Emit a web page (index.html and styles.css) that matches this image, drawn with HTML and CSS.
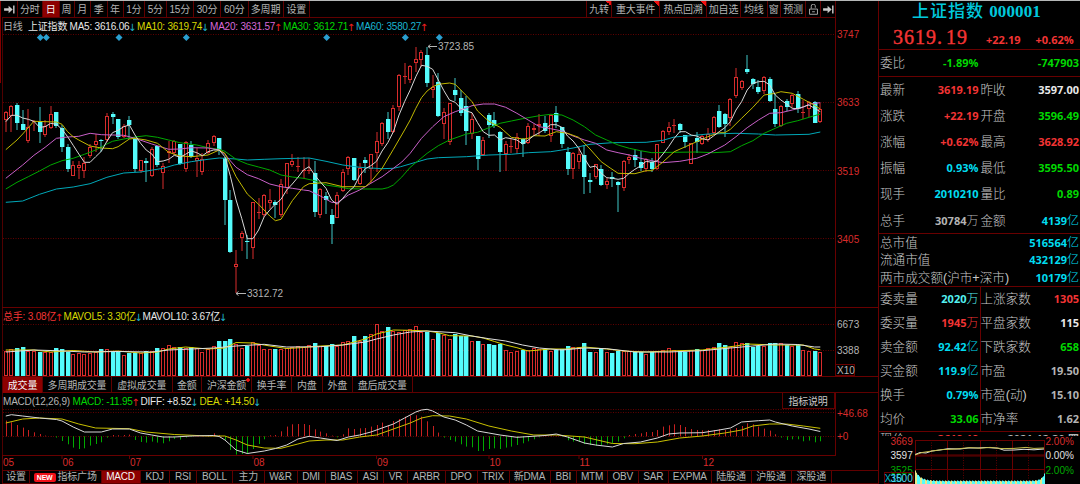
FILE: index.html
```html
<!DOCTYPE html>
<html lang="zh-CN">

<head>
  <meta charset="utf-8">
  <title>上证指数 000001</title>
  <link rel="stylesheet" href="styles.css">
</head>

<body>
  <div class="app">
    <div class="left">
      <div class="toolbar">
        <div class="periods">
          <span><svg class="icon" viewBox="0 0 12 10"><path d="M0 3.5h5V0.8L9.5 5 5 9.2V6.5H0zM10 0.5h1.6v9H10z"/></svg></span>
          <span>分时</span><span class="active">日</span><span>周</span><span>月</span><span>季</span><span>年</span>
          <span>1分</span><span>5分</span><span>15分</span><span>30分</span><span>60分</span><span>多周期</span><span>设置</span>
        </div>
        <div class="tools">
          <span class="corner">九转</span><span class="corner">重大事件</span><span class="corner">热点回溯</span>
          <span>加自选</span><span>均线</span><span>窗</span><span>预测</span>
          <span><svg class="icon lock" viewBox="0 0 10 12"><path d="M2.5 5V2.5a2 2 0 0 1 4.5-.5V4M.6 5.5h8.8v5.8H.6zM3.5 8.5h3"/></svg></span>
          <span><svg class="icon" viewBox="0 0 12 10"><path d="M0 3.5h5V0.8L9.5 5 5 9.2V6.5H0zM10 0.5h1.6v9H10z"/></svg></span>
        </div>
      </div>

      <div class="pane">
        <div class="legend price-legend">
          <span class="grey">日线</span><span class="white">上证指数</span>
          <span class="white">MA5: 3616.06<i class="down">↓</i></span>
          <span class="yellow">MA10: 3619.74<i class="down">↓</i></span>
          <span class="magenta">MA20: 3631.57<i class="up">↑</i></span>
          <span class="green">MA30: 3612.71<i class="up">↑</i></span>
          <span class="aqua">MA60: 3580.27<i class="up">↑</i></span>
        </div>
        <svg id="price" width="876" height="290" viewBox="2 18 876 290"></svg>
      </div>

      <div class="pane">
        <div class="legend volume-legend">
          <span class="red">总手: 3.08亿<i class="up">↑</i></span>
          <span class="yellow">MAVOL5: 3.30亿<i class="down">↓</i></span>
          <span class="white">MAVOL10: 3.67亿<i class="down">↓</i></span>
        </div>
        <svg id="volume" width="876" height="69" viewBox="2 308 876 69"></svg>
      </div>

      <div class="tabs volume-tabs">
        <span class="active">成交量</span><span>多周期成交量</span><span>虚拟成交量</span><span>金额</span><span class="dot">沪深金额</span><span>换手率</span><span>内盘</span><span>外盘</span><span>盘后成交量</span>
      </div>

      <div class="pane">
        <div class="legend macd-legend">
          <span class="grey">MACD(12,26,9)</span>
          <span class="green">MACD: -11.95<i class="up">↑</i></span>
          <span class="white">DIFF: +8.52<i class="down">↓</i></span>
          <span class="yellow">DEA: +14.50<i class="down">↓</i></span>
          <span class="explain">指标说明</span>
        </div>
        <svg id="macd" width="876" height="77" viewBox="2 393 876 77"></svg>
      </div>

      <div class="tabs indicator-tabs">
        <span>设置</span><span><b class="new">NEW</b>指标广场</span><span class="active">MACD</span><span>KDJ</span><span>RSI</span><span>BOLL</span><span>主力</span><span>W&amp;R</span><span>DMI</span><span>BIAS</span><span>ASI</span><span>VR</span><span>ARBR</span><span>DPO</span><span>TRIX</span><span>新DMA</span><span>BBI</span><span>MTM</span><span>OBV</span><span>SAR</span><span>EXPMA</span><span>陆股通</span><span>沪股通</span><span>深股通</span>
      </div>
    </div>

    <div class="quote">
      <div class="title">上证指数 <b>000001</b></div>
      <div class="last"><span class="big">3619.<em>19</em></span><b>+22.19</b><b>+0.62%</b></div>
      <div class="block ratio">
        <div class="cell"><label>委比</label><b class="green">-1.89%</b></div>
        <div class="cell"><label></label><b class="green">-747903</b></div>
      </div>
      <div class="block basics">
        <div class="cell"><label>最新</label><b class="red">3619.19</b></div>
        <div class="cell"><label>昨收</label><b class="white">3597.00</b></div>
        <div class="cell"><label>涨跌</label><b class="red">+22.19</b></div>
        <div class="cell"><label>开盘</label><b class="green">3596.49</b></div>
        <div class="cell"><label>涨幅</label><b class="red">+0.62%</b></div>
        <div class="cell"><label>最高</label><b class="red">3628.92</b></div>
        <div class="cell"><label>振幅</label><b class="cyan">0.93%</b></div>
        <div class="cell"><label>最低</label><b class="green">3595.50</b></div>
        <div class="cell"><label>现手</label><b class="cyan">2010210</b></div>
        <div class="cell"><label>量比</label><b class="green">0.89</b></div>
        <div class="cell"><label>总手</label><b class="grey">30784<u>万</u></b></div>
        <div class="cell"><label>金额</label><b class="cyan">4139<u>亿</u></b></div>
      </div>
      <div class="block wide">
        <div class="cell"><label>总市值</label><b class="cyan">516564<u>亿</u></b></div>
        <div class="cell"><label>流通市值</label><b class="cyan">432129<u>亿</u></b></div>
        <div class="cell"><label>两市成交额(沪市+深市)</label><b class="cyan">10179<u>亿</u></b></div>
      </div>
      <div class="block orders">
        <div class="cell"><label>委卖量</label><b class="teal">2020<u>万</u></b></div>
        <div class="cell"><label>上涨家数</label><b class="red">1305</b></div>
        <div class="cell"><label>委买量</label><b class="red">1945<u>万</u></b></div>
        <div class="cell"><label>平盘家数</label><b class="white">115</b></div>
        <div class="cell"><label>卖金额</label><b class="cyan">92.42<u>亿</u></b></div>
        <div class="cell"><label>下跌家数</label><b class="green">658</b></div>
        <div class="cell"><label>买金额</label><b class="cyan">119.9<u>亿</u></b></div>
        <div class="cell"><label>市盈</label><b class="grey">19.50</b></div>
        <div class="cell"><label>换手</label><b class="cyan">0.79%</b></div>
        <div class="cell"><label>市盈(动)</label><b class="grey">15.10</b></div>
        <div class="cell"><label>均价</label><b class="green">33.06</b></div>
        <div class="cell"><label>市净率</label><b class="grey">1.62</b></div>
      </div>
      <div class="block clipped">
        <div class="cell"><label>现价</label><b class="red">3619.19</b></div>
        <div class="cell"><label></label><b class="grey">2021-12-30,四</b></div>
      </div>
      <svg id="mini" width="201" height="48" viewBox="879 436 201 48"></svg>
    </div>
  </div>

  <script src="chart.js"></script>
</body>

</html>
```

FILE: styles.css
```css
* {
  box-sizing: border-box;
}

body {
  margin: 0;
  background: #000;
  color: #b4b4b4;
  font-family: "Liberation Sans", "Noto Sans CJK SC", sans-serif;
  font-size: 10px;
}

i,
em,
u {
  font-style: normal;
  text-decoration: none;
}

svg {
  display: block;
}

.app {
  display: flex;
  width: 1080px;
  height: 484px;
  overflow: hidden;
  border-top: 1px solid #b5b8b8;
}

.red { color: #f23434; }
.green { color: #00d800; }
.white { color: #e8e8e8; }
.grey { color: #b4b4b4; }
.yellow { color: #d8d800; }
.magenta { color: #d868d8; }
.aqua { color: #1ab4d0; }
.cyan { color: #00dcf0; }
.teal { color: #54f0f0; }

/* chart side */

.left {
  display: grid;
  grid-template-rows: 17px 290px 69px 16px 77px 14px;
  width: 878px;
  padding-left: 2px;
  background: linear-gradient(#800000, #800000) 0 0 / 1px 82px no-repeat;
}

.toolbar {
  display: flex;
  justify-content: space-between;
  width: 834px;
  border-bottom: 1px solid #600000;
}

.periods,
.tools,
.tabs {
  display: grid;
  white-space: nowrap;
  line-height: 15px;
}

.periods span,
.tools span,
.tabs span {
  display: flex;
  align-items: center;
  justify-content: center;
  border-right: 1px solid #600000;
  letter-spacing: -0.2px;
}

.periods {
  grid-template-columns: 15.5px 25.5px 16.5px 15px 16.5px 16.5px 16px 21.5px 21.5px 27.5px 27px 27.5px 35px 26.5px;
}

.tools {
  grid-template-columns: 25px 48px 47px 34px 26.5px 13.5px 25px 15px 15px;
  border-left: 1px solid #600000;
}

.periods .active,
.tabs .active {
  background: #8c0000;
  color: #f4f4f4;
}

.tools .corner {
  background: linear-gradient(45deg, transparent 50%, #f01010 50%) top right / 5px 5px no-repeat;
}

.icon {
  width: 11px;
  height: 9px;
  fill: #c8c8c8;
}

.lock {
  width: 9px;
  height: 11px;
  fill: none;
  stroke: #b4b4b4;
}

.pane {
  display: grid;
  border-left: 1px solid #500000;
}

.pane svg,
.legend {
  grid-area: 1 / 1;
}

.pane svg {
  margin-left: -1px;
}

.legend {
  display: grid;
  justify-content: start;
  align-content: start;
  line-height: 18px;
  letter-spacing: -0.2px;
  white-space: nowrap;
  z-index: 1;
}

.price-legend {
  grid-template-columns: 25px 41.5px 67.5px 73px 73px 73px 80px;
}

.volume-legend {
  grid-template-columns: 60.5px 79px 90px;
}

.macd-legend {
  grid-template-columns: 69.5px 68px 59px 582px 53px;
  line-height: 17px;
}

.legend .up { color: #f02020; }
.legend .down { color: #20b8d0; }

.legend i {
  display: inline-block;
  width: 5px;
  font: 10px/10px "DejaVu Sans", sans-serif;
  transform: translate(-1.5px, 1px);
}

.explain {
  color: #c8c8c8;
  border: 1px solid #600000;
  border-top: 0;
  text-align: center;
  height: 16px;
}

.tabs {
  justify-content: start;
  border-left: 1px solid #600000;
}

.volume-tabs {
  grid-template-columns: 40px 69px 60.5px 29.5px 50px 40px 30.5px 30.5px 59.5px;
  line-height: 17px;
  border-bottom: 1px solid #600000;
}

.volume-tabs span {
  height: 16px;
}

.volume-tabs .dot {
  background: radial-gradient(circle at 46px 3px, #f01010 1.5px, transparent 2px);
}

.indicator-tabs {
  grid-template-columns: 27px 71.5px 39px 29.5px 27px 36px 31.5px 33px 28px 32.5px 26px 24px 37.5px 32px 32px 41px 26.5px 31px 30.5px 30.5px 42.5px 40px 40px 40.5px;
  line-height: 12px;
  border-top: 1px solid #600000;
  border-bottom: 1px solid #600000;
}

.new {
  margin-right: 2px;
  padding: 0 3px;
  border-radius: 2px;
  background: #f01018;
  color: #fff;
  font-size: 7px;
  line-height: 9px;
}

.grid {
  stroke: #600000;
  stroke-dasharray: 1 1.5;
}

.frame {
  stroke: #680000;
  fill: none;
}

.axis {
  fill: #d82c2c;
}

.axis-grey {
  fill: #b4b4b4;
}

/* quote side */

.quote {
  width: 202px;
  border-left: 1px solid #680000;
}

.title {
  height: 23px;
  padding-left: 33px;
  color: #00c8dc;
  font: 500 17px/22px "Liberation Serif", "Noto Sans CJK SC", serif;
  letter-spacing: 1px;
  white-space: nowrap;
}

.title b {
  letter-spacing: 0.1px;
}

.last {
  display: flex;
  align-items: baseline;
  height: 25px;
  padding: 0 5px 0 14px;
  color: #f23434;
}

.last .big {
  width: 94px;
  font: 20px/26px "Liberation Serif", serif;
  letter-spacing: 1px;
  -webkit-text-stroke: 0.4px #f23434;
}

.last .big em {
  margin-left: 3px;
}

.last b {
  width: 50px;
  font: bold 11px "Open Sans", sans-serif;
}

.last b:last-child {
  width: 40px;
}

.block {
  display: grid;
  grid-template-columns: 100.5px 100.5px;
  border-top: 1px solid #680000;
}

.cell {
  display: flex;
  align-items: center;
  justify-content: space-between;
  padding: 0 1px;
  white-space: nowrap;
  overflow: hidden;
}

.cell label {
  font: 300 12.6px/18px "Liberation Sans", "Noto Sans CJK SC", sans-serif;
  color: #c8c8c8;
}

.cell b {
  font: bold 11px/18px "Open Sans", "Noto Sans CJK SC", sans-serif;
}

.cell u {
  font-weight: 300;
  font-size: 12px;
}

.ratio {
  height: 27px;
}

.basics {
  height: 157px;
  grid-template-rows: repeat(6, 26.1px);
}

.wide {
  height: 53px;
  grid-template-columns: 201px;
  grid-template-rows: repeat(3, 17.5px);
}

.orders {
  height: 145px;
  grid-template-rows: repeat(6, 24px);
  background: linear-gradient(#680000, #680000) 101px 0 / 1px 100% no-repeat;
}

.clipped {
  height: 5px;
  overflow: hidden;
}

.clipped .cell {
  height: 14px;
}
```

FILE: chart.js
```js
const RED = "#d82c2c";
const CYAN = "#54fcfc";
const STEP = 5.617;
const xAt = i => 5.8 + i * STEP;

// direction, high, body top, body bottom, low
const candles = `r111,112,120,132 r105,106,116,132 c103,105,123,130 c110,124,130,130 r109,127,141,143 r120,121,122,131
c107,122,132,143 r120,126,135,137 r106,114,128,129 c112,112,126,128 c125,128,147,152 c144,147,169,172
r161,165,176,176 r161,165,168,179 r157,163,171,178 r144,147,156,158 r134,141,145,152 c139,140,141,152
r113,116,140,142 c112,114,117,124 c119,119,137,139 r124,126,137,138 c116,120,125,139 c137,138,169,172
r160,160,171,173 c158,161,163,182 r147,149,176,177 c146,146,165,167 r163,166,173,189 r141,151,153,163
r140,141,153,155 c144,144,164,165 r141,142,169,172 c141,145,157,158 r148,158,161,177 r153,159,172,175
r140,143,153,154 r135,136,143,146 c138,138,150,155 c157,158,200,225 c190,200,252,253 r250,264,267,293
r231,233,238,251 c235,241,242,259 r202,202,248,259 r198,212,213,219 r194,195,215,217 r189,200,203,209
c200,202,205,218 r179,184,215,217 r163,163,188,194 r154,161,165,167 r157,166,167,172 r157,170,171,179
r158,170,171,174 c161,173,212,217 r188,189,215,218 c192,196,200,214 c209,215,224,244 r192,195,218,218
r169,172,191,192 r156,157,169,175 c158,158,180,181 r163,168,184,185 c157,160,163,173 r154,154,169,183
r132,141,153,172 r122,123,144,146 c112,119,132,139 r105,108,132,133 r74,75,107,111 r63,76,77,84
r65,66,80,83 r47,59,63,72 r50,52,60,67 c47,55,83,87 r75,87,90,98 c73,82,116,117
r108,112,124,139 r103,103,142,145 c78,90,95,101 c90,98,113,116 c96,106,131,145 r113,119,134,139
c136,136,159,170 r137,140,155,156 c113,115,125,138 c112,120,126,128 c131,132,152,172 r141,144,154,171
r138,146,147,153 r133,137,149,154 c138,139,144,157 r123,126,143,144 r124,128,130,136 r114,124,126,136
c116,123,131,133 r114,115,136,142 c106,113,122,128 c127,127,144,148 c147,152,169,175 r152,153,169,179
r147,154,162,169 c145,155,177,194 c173,180,182,193 r164,164,177,179 c165,169,185,186 r178,181,185,189
c172,177,179,187 c181,182,185,212 r160,161,188,191 r154,157,160,164 c149,155,160,167 c151,162,168,171
r158,159,169,172 c158,162,169,172 r144,144,169,170 r130,131,143,143 r122,127,132,135 r119,125,126,133
c123,124,130,133 c135,135,142,148 r143,143,164,164 c132,138,142,153 r135,136,144,145 r128,134,140,142
r116,117,133,135 c105,111,127,128 c113,114,124,137 r98,99,118,126 r68,77,96,98 r80,81,88,90
c55,69,72,74 c78,79,84,89 c80,87,92,94 r76,77,91,94 c77,79,101,102 c94,109,124,127
r105,106,126,127 c99,101,107,111 r94,95,104,108 c91,94,109,113 r100,112,113,119 r101,102,109,117
c101,102,123,123 r103,109,122,123`.split(/\s+/).map(s => [s[0], ...s.slice(1).split(",").map(Number)]);

const volumes = [351, 349, 348, 347, 351, 351, 352, 352, 352, 347.5, 348.5, 352, 354, 353, 354, 353, 352, 349, 348.5, 351,
  352, 355, 353, 352.5, 353, 351, 351, 348, 348, 344.5, 347, 346.5, 348, 347, 348, 352, 349, 346, 341, 341,
  338.5, 344, 348, 346, 342, 345, 348.5, 348.5, 349, 349, 348, 347, 346, 347, 345, 342.5, 346, 346, 344, 346,
  342, 340.5, 336, 341, 335.5, 334, 324, 331, 327, 331, 332, 330, 328.5, 326, 332, 331.7, 338.7, 332.7, 335.3, 339.3,
  334, 335.7, 336, 341.3, 340.7, 344.3, 344, 345, 344.3, 350.3, 352, 351, 350, 350, 348, 349, 349, 351, 350, 349,
  346.3, 347, 347, 343, 351.7, 351.7, 348.3, 352, 353, 351, 351, 351, 352, 352, 354, 352, 351, 350, 347.5, 350,
  351, 352, 350, 349, 350, 348, 346.5, 342.7, 344.5, 346.7, 342, 343, 342.7, 347.3, 346, 346, 343.3, 342.7, 343.3, 344.7,
  346.3, 344.5, 350.3, 351, 351.3, 352];

const hist = [47, 42, 34, 26, 19, 12, 7, 2, 1, -4, -14, -24, -34, -38, -36, -28, -23, -18, -4, 4,
  3, 4, 5, -11, -17, -19, -16, -19, -21, -15, -8, -10, -4, -2, 3, 2, 4, 9, 4, -11,
  -41, -55, -53, -53, -38, -23, -9, 3, 4, 15, 29, 36, 37, 37, 34, 21, 14, 9, 2, -3,
  6, 24, 22, 24, 25, 29, 34, 41, 34, 46, 52, 59, 62, 63, 59, 45, 31, 11, -4, -11,
  -16, -24, -31, -33, -44, -44, -38, -36, -38, -34, -31, -26, -21, -15, -9, -3, 1, 2, 2, -2,
  -12, -16, -16, -23, -26, -28, -27, -24, -21, -16, -6, 4, 7, 9, 13, 13, 19, 29, 33, 36,
  34, 28, 22, 19, 18, 19, 19, 22, 19, 21, 25, 31, 39, 36, 29, 23, 17, 6, -4, -11,
  -9, -9, -15, -13, -18, -15];

const ma5 = [121.7, 115.3, 115.3, 118, 119.3, 121.3, 127.3, 126.7, 123.3, 124.3, 129.3, 136.7, 145.3, 154, 162.3, 162.3, 156.7, 151.3, 141.3, 132.7,
  130.3, 126.7, 125, 135, 143.3, 150, 154, 161.7, 161, 159.3, 155.3, 157.3, 154.3, 151, 152.7, 155.7, 151.7, 150, 150, 156.7,
  176.7, 200, 218.3, 238.7, 238.7, 230, 216.7, 210, 204, 199.3, 190, 184, 177.3, 170, 166.7, 175, 182, 188.3, 200, 204.3,
  198.3, 191.7, 186.7, 175.7, 168.7, 165.7, 161.3, 151, 142.7, 131.7, 115, 101.7, 90, 76.7, 65.3, 66.3, 69.3, 80, 90.7, 100,
  102.3, 108.3, 111, 112.7, 122.7, 131.7, 135.3, 135, 140, 137.7, 138.7, 140, 144, 140, 135.7, 132.7, 129, 124.7, 124.7, 127.3,
  136, 141, 148.3, 158.3, 167.3, 166, 173.3, 177.7, 178.3, 179.3, 178.3, 173.3, 169.3, 166, 161.3, 162.3, 160.7, 154, 146.7, 138.3,
  131.7, 131.7, 135, 136, 138.7, 140, 136, 131.7, 127.7, 121.7, 110, 101.7, 90, 83.3, 81.7, 81.3, 85, 95, 100, 104,
  108.3, 108.7, 106.7, 105, 108.3, 111.7];

// index:y pairs
const lines = {
  ma10: "0:149.7 2:140 3:134 5:121.3 9:122 10:124.3 11:131.7 12:136.7 13:140 15:146 17:148 19:148.7 20:146.7 22:139 23:138.3 25:140 27:143.3 29:152.3 31:156 33:156.7 36:155 38:150 39:153.3 41:176.7 43:194 45:204.3 47:216 48:220.7 49:219.3 51:200.7 53:186.7 54:183.7 57:182.7 60:186.7 62:186.7 64:186.7 65:181.7 67:168.3 69:149.3 71:130 72:120 73:108.3 74:97.7 75:91 76:86.7 77:84.3 79:83 80:84.3 82:95.7 83:101.7 84:111 86:121.3 88:127.3 90:137.3 92:139 93:138.3 94:135.7 96:136 98:131.7 100:133.3 102:137.3 104:149 106:161.7 107.6:168 109:173.3 112:173.7 114:170.7 115:170.7 117:162 119:151.7 121:146.7 123:141.7 125:136.7 127:132.7 128:132.7 129:129.3 131:118.3 133:107.3 135:95 137:93.3 138:91.7 140:93.3 142:99.3 144:105.3 145:109",
  ma20: "0:178.3 3:165 5:155.3 7:147.3 9:138.3 11:137 13:136.3 15:133.3 17:134.7 21:135.3 23:138.3 26:144 29:149.3 31:149 33:147.7 36:148 38:150 39:154 40:161 41:167.3 43:174.7 45:178.7 47:184 49:186.7 51:188.3 53:190 54:190.7 56:196 58:202.3 59:202.7 61:195 63:190 65:183.3 67:176.7 69:168.3 70.5:162 72:153.3 74:138.3 76:126.7 78:116.7 80:111.7 82:108 83:105.7 85:104 87:104 89:107.3 91:113.3 93:120 95:126.7 97:128.7 99:131 101:136 103:140 105:143.3 107:150 109:152.7 111:155 113:158.3 115:160.7 117:162.7 120:161.3 123:158.3 125:154 128:145 130:136.7 132:127.7 134:120 136:113.3 138:112.7 140:110 142:107.3 143:104 145:102.7",
  ma30: "0:189 2:182.3 4:176.7 6:171 8:165 10:160.7 12:158.3 14:154.3 16:150 18:144 19:141.3 21:139 23:137 25:135.7 27:137.3 29:140 31:142.7 34:145 36:147.7 38:149.3 39:151.3 41:159.3 43:164 45:167 47:170 49:175 51:177 53:178.3 55:180.7 57:185 59:186.7 61:188.7 64:189 67:189 68:187.7 69:185 70.5:177 72:167.3 75:153.3 77:145.7 79:140 82:134 84:132.3 86:127.7 88:123.3 90:121 92:118.7 95:115.7 97:114.3 99:115 101:120 103:126.7 105:135 107:140 109:145 111:148.3 113:150.7 115:152.7 119:152.3 123:152 126:152.7 129:151.7 131:145.7 133:140.7 135:133.3 137:128.3 139:123.3 141:120.7 143:117.3 145:114",
  ma60: "0:202.3 3:201 6:194.3 9:189 12:187 15:183.7 18:177.3 21:173 24:172 28:168.3 30:165 33:161.7 36:159.3 38:158 41:159 43:160 46:159.3 49:158.7 54:158 57:161.3 60:165 63:167.3 67:168.7 69:168.3 70.3:166.7 73:162.3 75:159 77:157.7 82:156.7 86:155 90:154.3 93:152.7 97:151.7 99:150 101:148 104:144.3 108:142.7 114:142.3 117:140.3 119:137 122:135.7 125:134 130:133.3 134:134 137:135 143:134.3 145:132",
  vol5: "0:350 5:350 8:352 12:350.5 16:352 20:351 24:353 27:352 29:349 32:347 36:349 39:348 41:342.5 44:343 47:346 50:348.5 53:347.5 56:346 60:345 62:342 64:339 66:334 69:330 72:330.3 75:331 77:332.7 79:335.7 83:336 85:338 87:341.5 89:345 91:347.7 93:351 95:350 97:349 100:349 103:347 107:349 110:351 114:352 118:351 124:350 127:348 130:346 132:344 137:345 142:345 144:349 145:349.7",
  vol10: "0:352 5:350 9:350.7 14:352 20:351.5 26:352 29:350 33:349 37:348 41:346 46:344.3 50:347 56:346.7 60:345 64:342 66:339 69:335 72:332 75:331 80:332.7 83:336 86:338.7 89:341 92:345 95:348 99:350 103:348 107:348.7 112:352 118:352 124:350.7 129:348 133:346 137:344 141:344.5 144:347 145:347",
  diff: "0:416 1:414.7 3:416 6:418 9:419.5 10:421 12:427 14:432 17:432 19:429 22:429 24:433 26:435 28:437 30:437 33:436 37:435.5 38:436.5 39:440 41:450 43:453.5 46:451 48:448.5 50:445 52:439 54:436.3 56:438 59:440.5 61:437 63:435 65:432 67:428 69:424 71:418 73:412 74:410 75:409.3 76:411 78:417 80:420 82:425 84:431 86:433 88:435 91:437.3 96:435.5 98:434 100:437 103:443 105:445 108:447 110:443.5 113:442 116:438 118:434 120:433 124:432.7 127:430 129:428 131:422 134:420.7 136:420 137:422 140:426 143:429 145:431.5",
  dea: "0:423 3:419 6:418 10:419 13:424 16:428 22:428.7 25:432 30:434.5 36:436 39:436 41:440 43:445 46:448 49:448.3 52:444 54:441 57:440 60:440 63:437 66:435 69:429 72:423 74:418 76:415.7 79:416 82:419 86:426 90:431 94:435 98:435 103:437 108:443.5 112:443.7 116:442 120:438 124:436 128:433 131:430 133:426 136:424 139:424 142:426 145:428.3"
};

function polyline(points, color) {
  return `<polyline points="${points}" fill="none" stroke="${color}" stroke-width="1"/>`;
}

function curve(spec, color) {
  return polyline(spec.split(" ").map(p => {
    const [i, y] = p.split(":");
    return `${xAt(+i).toFixed(1)},${y}`;
  }).join(" "), color);
}

function hline(y, cls, x1 = 3, x2 = 836) {
  return `<path class="${cls}" d="M${x1} ${y}H${x2}"/>`;
}

function vline(x, cls, y1, y2) {
  return `<path class="${cls}" d="M${x} ${y1}V${y2}"/>`;
}

function text(x, y, str, cls, extra = "") {
  return `<text x="${x}" y="${y}" class="${cls}" ${extra}>${str}</text>`;
}

function bar(x, top, bottom, dir) {
  const left = Math.round(x - 2);
  const h = Math.max(bottom - top, 1);
  if (dir === "c") {
    return `<rect x="${left}" y="${top}" width="4.4" height="${h}" fill="${CYAN}"/>`;
  }
  if (h <= 1) {
    return `<rect x="${left}" y="${top}" width="4" height="1" fill="${RED}"/>`;
  }
  return `<rect x="${left + .5}" y="${top + .5}" width="3" height="${h - 1}" fill="#000" stroke="${RED}"/>`;
}

function drawPrice() {
  let s = [34.5, 102.5, 170.5, 238.5].map(y => hline(y, "grid")).join("");
  s += vline(835.5, "frame", 18, 308) + hline(307.5, "frame", 2, 878);
  candles.forEach(([dir, high, top, bottom, low], i) => {
    const x = Math.round(xAt(i) - 2) + 2;
    s += `<path d="M${x} ${high}V${low}" stroke="${dir === "c" ? "#40c8c8" : RED}"/>` + bar(xAt(i), top, bottom, dir);
  });
  s += curve(lines.ma60, "#00a8b8") + curve(lines.ma30, "#00a800") + curve(lines.ma20, "#c860c8") + curve(lines.ma10, "#c0b800");
  s += polyline(ma5.map((y, i) => `${xAt(i).toFixed(1)},${y}`).join(" "), "#d8d8d8");
  [40.3, 46.3, 119, 186.3, 326.7, 405.3, 439.3].forEach(x => {
    s += `<path d="M${x - 3.5} 37.5l3.5-3.5 3.5 3.5-3.5 3.5z" fill="#2a9fd0"/>`;
  });
  s += `<path d="M428 46.5h9M430.5 44.5l-2.5 2 2.5 2M236 293.5h10M238.5 291.5l-2.5 2 2.5 2" fill="none" stroke="#b4b4b4"/>`;
  s += text(438, 50, "3723.85", "axis-grey") + text(247, 296.5, "3312.72", "axis-grey");
  [["3747", 38], ["3633", 106], ["3519", 174.5], ["3405", 242.5]].forEach(([t, y]) => s += text(837, y, t, "axis"));
  document.getElementById("price").innerHTML = s;
}

function drawVolume() {
  let s = hline(324.5, "grid") + hline(350.5, "grid");
  volumes.forEach((y, i) => s += bar(xAt(i), Math.round(y), 376, candles[i][0]));
  s += curve(lines.vol5, "#d8d000") + curve(lines.vol10, "#e0e0e0");
  s += vline(835.5, "frame", 308, 377) + hline(376.5, "frame", 2, 878);
  s += `<rect class="frame" x="835.5" y="364.5" width="19" height="11"/>`;
  s += text(837, 328, "6673", "axis-grey") + text(837, 354, "3388", "axis-grey") + text(837, 374, "X10", "axis-grey");
  document.getElementById("volume").innerHTML = s;
}

function drawMacd() {
  let s = [409.5, 412.5, 436.5].map(y => hline(y, "grid")).join("");
  hist.forEach((v, i) => {
    const x = Math.round(xAt(i)) + .5;
    s += `<path d="M${x} 436.3V${(436.3 - v / 3).toFixed(1)}" stroke="${v > 0 ? "#c82020" : "#00a800"}"/>`;
  });
  s += curve(lines.dea, "#c8c000") + curve(lines.diff, "#d8d8d8");
  s += vline(835.5, "frame", 393, 456) + hline(455.5, "frame", 2, 836);
  s += text(837, 416.5, "+46.68", "axis") + text(837, 440, "+0", "axis");
  [[3, "05"], [62.5, "06"], [130, "07"], [253.5, "08"], [377, "09"], [489.5, "10"], [579.5, "11"], [703, "12"]].forEach(([x, t]) => {
    s += vline(x - .5, "frame", 456, 459) + text(x, 465.5, t, "axis");
  });
  document.getElementById("macd").innerHTML = s;
}

function drawMini() {
  let s = "";
  [440.5, 455, 456, 469.5].forEach(y => s += hline(y, "frame", 915, 1045));
  [915.5, 947.5, 980.5, 1012.5, 1044.5].forEach(x => s += vline(x, "frame", 440, 484));
  [931.5, 963.5, 996.5, 1028.5].forEach(x => s += vline(x, "grid", 440, 484));
  for (let x = 915; x < 1045; x++) {
    const edge = Math.exp(-(x - 915) / 5) * 10 + Math.exp(-(1044 - x) / 3) * 7;
    const top = 480.5 - edge + (x % 3) * .4;
    s += `<rect x="${x}" y="${top.toFixed(1)}" width="1" height="${(484 - top).toFixed(1)}" fill="${x % 5 < 2 ? "#e8e888" : CYAN}"/>`;
  }
  s += polyline("915,454.5 920,452.5 926,453 932,451 940,450 948,448.7 960,449 968,448 978,448 986,447.5 998,448.2 1004,450.2 1014,450 1024,449.3 1034,449.8 1044,449", "#e0e0e0");
  s += polyline("915,455 922,452.5 932,451 942,449.6 956,449 970,447.6 980,448.2 990,447.4 1002,448.6 1014,448.4 1026,447.4 1034,448.4 1044,448", "#c8c050");
  s += text(890.5, 444.5, "3669", "axis") + text(890.5, 459, "3597", "", 'fill="#e0e0e0"') + text(890.5, 473.5, "3525", "", 'fill="#00a800"');
  s += `<rect class="frame" x="884.5" y="472.5" width="29" height="11"/>`;
  s += text(884.5, 481.5, "X10", "", 'fill="#00b8c8"') + text(890.5, 481.5, "3500", "", 'fill="#54dcec"');
  s += text(1045.5, 444.5, "2.00%", "axis") + text(1045.5, 459, "0.00%", "", 'fill="#e0e0e0"') + text(1045.5, 473.5, "2.00%", "", 'fill="#00a800"');
  document.getElementById("mini").innerHTML = s;
}

drawPrice();
drawVolume();
drawMacd();
drawMini();
```
